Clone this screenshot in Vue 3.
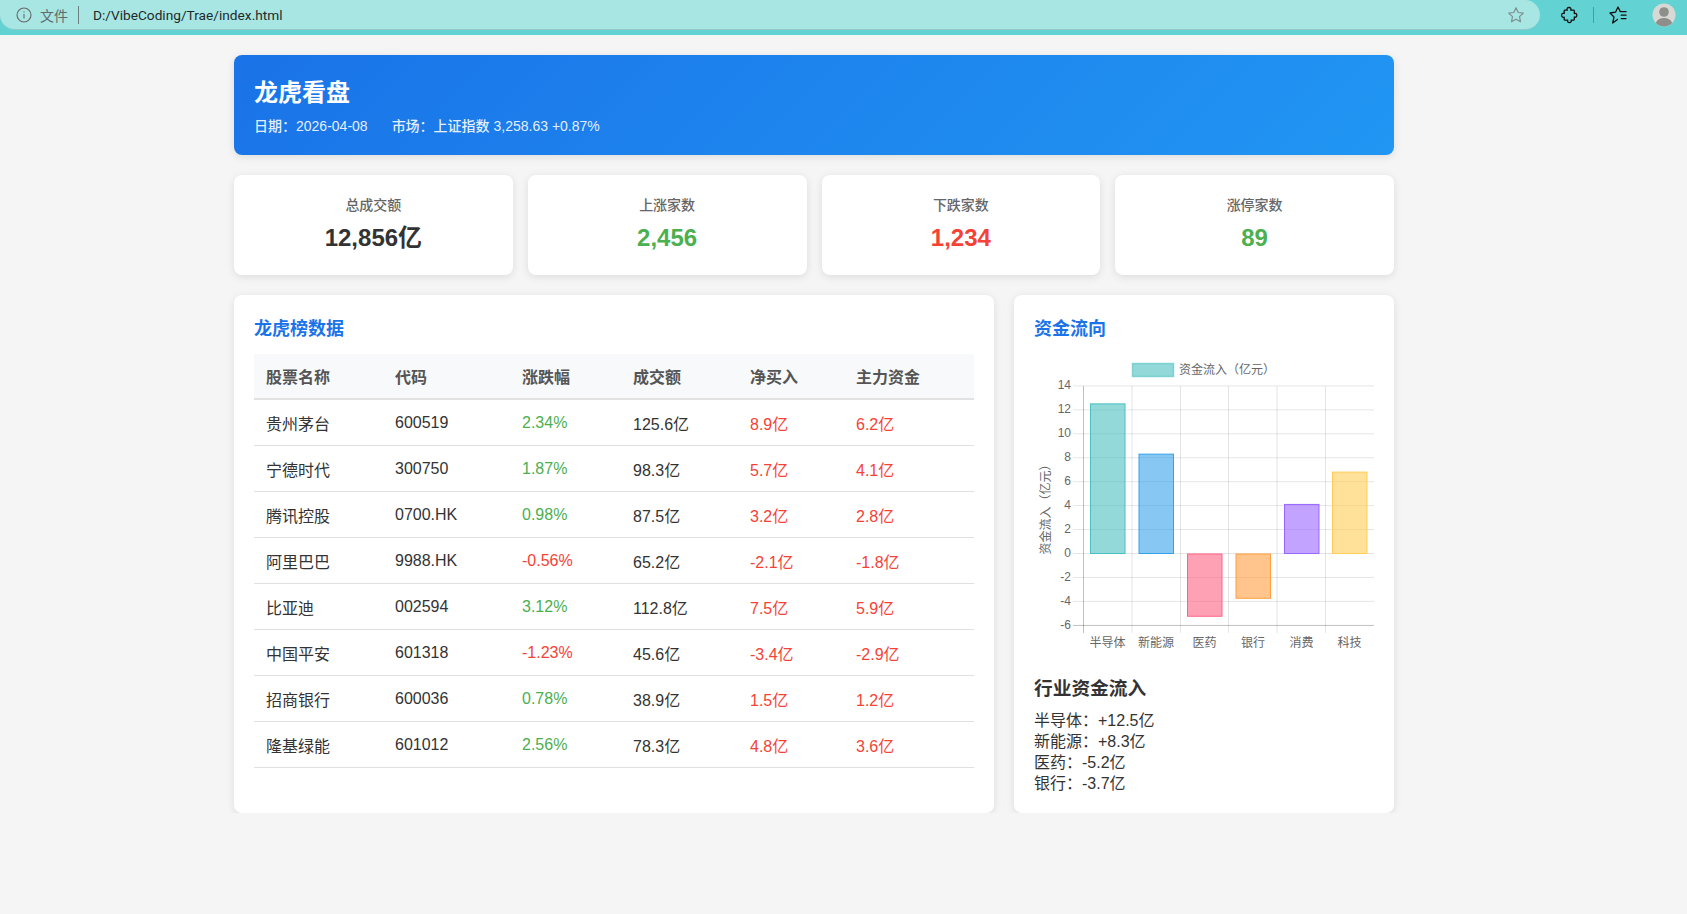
<script setup>
const stats = [
  { label: '总成交额', value: '12,856亿', tone: 'dark' },
  { label: '上涨家数', value: '2,456', tone: 'up' },
  { label: '下跌家数', value: '1,234', tone: 'down' },
  { label: '涨停家数', value: '89', tone: 'up' },
]
const rows = [
  ['贵州茅台', '600519', '2.34%', '125.6亿', '8.9亿', '6.2亿', false],
  ['宁德时代', '300750', '1.87%', '98.3亿', '5.7亿', '4.1亿', false],
  ['腾讯控股', '0700.HK', '0.98%', '87.5亿', '3.2亿', '2.8亿', false],
  ['阿里巴巴', '9988.HK', '-0.56%', '65.2亿', '-2.1亿', '-1.8亿', true],
  ['比亚迪', '002594', '3.12%', '112.8亿', '7.5亿', '5.9亿', false],
  ['中国平安', '601318', '-1.23%', '45.6亿', '-3.4亿', '-2.9亿', true],
  ['招商银行', '600036', '0.78%', '38.9亿', '1.5亿', '1.2亿', false],
  ['隆基绿能', '601012', '2.56%', '78.3亿', '4.8亿', '3.6亿', false],
]
const flows = ['半导体：+12.5亿', '新能源：+8.3亿', '医药：-5.2亿', '银行：-3.7亿']

// Chart geometry, in the coordinates of the 340 x 300 chart box
const zeroY = 203.5
const unit = 11.97
const ticks = [14, 12, 10, 8, 6, 4, 2, 0, -2, -4, -6].map((v) => ({ v, y: zeroY - v * unit }))
const gridX = [49.5, 98, 146.5, 194.5, 243, 291.5]
const bars = [
  { label: '半导体', v: 12.5, x: 56.5, rgb: '75,192,192' },
  { label: '新能源', v: 8.3, x: 105, rgb: '54,162,235' },
  { label: '医药', v: -5.2, x: 153.5, rgb: '255,99,132' },
  { label: '银行', v: -3.7, x: 202, rgb: '255,159,64' },
  { label: '消费', v: 4.1, x: 250.5, rgb: '153,102,255' },
  { label: '科技', v: 6.8, x: 298.5, rgb: '255,205,86' },
].map((b) => ({
  ...b,
  y: b.v > 0 ? zeroY - b.v * unit : zeroY + 0.5,
  h: Math.abs(b.v) * unit,
  fill: `rgba(${b.rgb},0.6)`,
  stroke: `rgb(${b.rgb})`,
}))
</script>

<template>
  <div class="shell">
    <div class="browser">
      <div class="address">
        <svg class="info" width="16" height="16" viewBox="0 0 16 16" fill="none" stroke="#666" stroke-width="1.1">
          <circle cx="8" cy="8" r="7" />
          <path d="M8 7v4.4M8 4.4v1.2" />
        </svg>
        <span class="scheme">文件</span>
        <span class="divider"></span>
        <span class="url">D:/VibeCoding/Trae/index.html</span>
        <svg class="star" width="18" height="18" viewBox="0 0 18 18" fill="none" stroke="#7d8f90" stroke-width="1.2" stroke-linejoin="round">
          <path d="M9 1.800l2.200 4.700 5.100.6-3.800 3.500 1 5.100L9 13.200l-4.500 2.500 1-5.100L1.700 7.100l5.100-.6z" />
        </svg>
      </div>
      <div class="tools">
        <svg class="puzzle" width="18" height="18" viewBox="0 0 18 18" fill="none" stroke="#111" stroke-width="1.300" stroke-linejoin="round" stroke-linecap="round">
          <path d="M7.300 4.200C6.500 2.600 7.300 1.500 9 1.500s2.500 1.100 1.700 2.700h2.800c.5 0 .8.300.8.800v2.600c1.500-.7 2.500.2 2.500 1.700s-1 2.400-2.500 1.700v2.400c0 .5-.3.800-.8.800h-2.400c.6 1.500-.2 2.400-1.700 2.400s-2.300-.9-1.700-2.400H5c-.5 0-.8-.3-.8-.8v-2.300c-1.500.7-2.600-.2-2.600-1.800s1.100-2.400 2.600-1.800V5c0-.5.3-.8.800-.8z" />
        </svg>
        <span class="tool-divider"></span>
        <svg class="favorites" width="18" height="18" viewBox="0 0 18 18" fill="none" stroke="#111" stroke-width="1.300" stroke-linejoin="round" stroke-linecap="round">
          <path d="M8.500 13.500L3.700 17 5 11 1 7l5.500-.8L9 1l2.300 4.600" />
          <path d="M12.200 5.700h4.800M12.200 9.200h4.800M12.200 12.600h4.800" />
        </svg>
        <svg class="avatar" width="24" height="24" viewBox="0 0 24 24">
          <circle cx="12" cy="12" r="11.500" fill="#d8d8d4" />
          <circle cx="12" cy="9" r="4.800" fill="#8e8e8a" />
          <path d="M3.800 20c1.300-3.400 4.300-5 8.200-5s6.900 1.600 8.200 5a11.500 11.500 0 0 1-16.400 0z" fill="#8e8e8a" />
        </svg>
      </div>
    </div>

    <main class="page">
      <header class="hero">
        <h1>龙虎看盘</h1>
        <p><span class="date">日期：2026-04-08</span><span>市场：上证指数 3,258.63 +0.87%</span></p>
      </header>

      <section class="stats">
        <div v-for="s in stats" :key="s.label" class="card stat">
          <div class="stat-label">{{ s.label }}</div>
          <div class="stat-value" :class="s.tone">{{ s.value }}</div>
        </div>
      </section>

      <section class="columns">
        <div class="card panel">
          <h2>龙虎榜数据</h2>
          <table>
            <thead>
              <tr>
                <th>股票名称</th><th>代码</th><th>涨跌幅</th><th>成交额</th><th>净买入</th><th>主力资金</th>
              </tr>
            </thead>
            <tbody>
              <tr v-for="r in rows" :key="r[1]">
                <td>{{ r[0] }}</td>
                <td>{{ r[1] }}</td>
                <td :class="r[6] ? 'down' : 'up'">{{ r[2] }}</td>
                <td>{{ r[3] }}</td>
                <td class="down">{{ r[4] }}</td>
                <td class="down">{{ r[5] }}</td>
              </tr>
            </tbody>
          </table>
        </div>

        <div class="card panel">
          <h2>资金流向</h2>
          <svg class="chart" width="340" height="300" viewBox="0 0 340 300">
            <rect x="98.500" y="13.500" width="41" height="13" fill="rgba(75,192,192,0.6)" stroke="rgba(75,192,192,0.6)" stroke-width="1.500" />
            <text x="145" y="23.500" class="tick">资金流入（亿元）</text>

            <g stroke="rgba(0,0,0,0.1)" stroke-width="1">
              <line v-for="t in ticks" :key="t.v" x1="39" x2="340" :y1="t.y" :y2="t.y" />
              <line v-for="x in gridX" :key="x" :x1="x" :x2="x" y1="36" y2="283" />
            </g>
            <line x1="49.500" x2="49.500" y1="36" y2="283" stroke="rgba(0,0,0,0.16)" />
            <line x1="39" x2="340" y1="275.500" y2="275.500" stroke="rgba(0,0,0,0.16)" />

            <rect
              v-for="b in bars"
              :key="b.label"
              :x="b.x"
              :y="b.y"
              width="34.500"
              :height="b.h"
              :fill="b.fill"
              :stroke="b.stroke"
              stroke-width="1"
            />

            <text v-for="t in ticks" :key="'l' + t.v" x="37" :y="t.y + 3.500" text-anchor="end" class="tick">{{ t.v }}</text>
            <text v-for="b in bars" :key="'x' + b.label" :x="b.x + 17" y="297" text-anchor="middle" class="tick">{{ b.label }}</text>
            <text transform="translate(16 156.500) rotate(-90)" text-anchor="middle" class="tick">资金流入（亿元）</text>
          </svg>
          <h3>行业资金流入</h3>
          <p v-for="f in flows" :key="f" class="flow">{{ f }}</p>
        </div>
      </section>
    </main>
  </div>
</template>

<style scoped>
.shell {
  font-family: "Liberation Sans", "Noto Sans CJK SC", sans-serif;
  color: #333;
}
.browser {
  height: 35px;
  background: #63d2d2;
  display: flex;
  align-items: flex-start;
  box-sizing: border-box;
}
.address {
  width: 1540px;
  height: 30px;
  box-sizing: border-box;
  background: #a8e6e4;
  border-bottom: 1px solid #93c9c9;
  border-radius: 15px;
  border-top-left-radius: 0;
  display: flex;
  align-items: center;
  padding: 0 13px 0 16px;
  flex: none;
}
.scheme {
  margin-left: 8px;
  font-size: 14px;
  color: #5d6b6b;
}
.divider {
  width: 1px;
  height: 18px;
  background: #6d8080;
  margin: 0 14px 0 10px;
}
.url {
  font-family: Roboto, "Liberation Sans", sans-serif;
  font-size: 13.700px;
  color: #1f2a2a;
}
.star {
  margin-left: auto;
  margin-right: 2px;
}
.tools {
  flex: 1;
  height: 30px;
  display: flex;
  align-items: center;
}
.puzzle {
  margin-left: 20px;
}
.tool-divider {
  width: 1px;
  height: 16px;
  background: #4f9a9b;
  margin: 0 15px 0 15px;
}
.avatar {
  margin-left: 25px;
}
.page {
  padding: 20px 0 0 234px;
  width: 1160px;
}
.hero {
  height: 100px;
  box-sizing: border-box;
  padding: 22px 20px 20px;
  color: #fff;
  border-radius: 8px;
  background: linear-gradient(135deg, #1a73e8, #2196f3);
  box-shadow: 0 2px 8px rgba(0, 0, 0, 0.1);
}
.hero h1 {
  margin: 0 0 8px;
  font-size: 24px;
  line-height: 32px;
  font-weight: 700;
}
.hero p {
  margin: 0;
  font-size: 14px;
  line-height: 18px;
  font-weight: 500;
  color: rgba(255, 255, 255, 0.9);
}
.date {
  margin-right: 24px;
}
.stats {
  display: grid;
  grid-template-columns: repeat(4, 1fr);
  gap: 15px;
  margin-top: 20px;
}
.card {
  background: #fff;
  border-radius: 8px;
  box-shadow: 0 2px 8px rgba(0, 0, 0, 0.1);
}
.stat {
  height: 100px;
  box-sizing: border-box;
  padding-top: 20px;
  text-align: center;
}
.stat-label {
  font-size: 14px;
  line-height: 20px;
  font-weight: 500;
  color: #666;
}
.stat-value {
  margin-top: 7px;
  font-size: 24px;
  line-height: 32px;
  font-weight: 700;
}
.dark {
  color: #333;
}
.up {
  color: #4caf50;
}
.down {
  color: #f44336;
}
.columns {
  display: grid;
  grid-template-columns: 760px 380px;
  gap: 20px;
  margin-top: 20px;
}
.panel {
  padding: 22px 20px 20px;
  box-sizing: border-box;
  height: 518px;
}
h2 {
  margin: 0 0 12px;
  height: 25px;
  font-size: 18px;
  line-height: 25px;
  font-weight: 700;
  color: #1a73e8;
}
table {
  width: 720px;
  border-collapse: collapse;
  table-layout: fixed;
  font-size: 16px;
}
th {
  height: 45px;
  box-sizing: border-box;
  padding: 0 12px;
  text-align: left;
  background: #f8f9fa;
  color: #555;
  font-weight: 700;
  border-bottom: 2px solid #e2e2e2;
}
th:nth-child(1) { width: 129px; }
th:nth-child(2) { width: 127px; }
th:nth-child(3) { width: 111px; }
th:nth-child(4) { width: 117px; }
th:nth-child(5) { width: 106px; }
th:nth-child(6) { width: 130px; }
td {
  height: 46px;
  box-sizing: border-box;
  padding: 2px 12px 0;
  border-bottom: 1px solid #e0e0e0;
}
.chart {
  display: block;
  margin-top: -4px;
}
.tick {
  font-family: "Liberation Sans", "Noto Sans CJK SC", sans-serif;
  font-size: 12px;
  fill: #666;
}
h3 {
  margin: 27px 0 9px;
  font-size: 18.720px;
  line-height: 24px;
  font-weight: 700;
  color: #333;
}
.flow {
  margin: 0;
  font-size: 16px;
  line-height: 21px;
}
</style>

<style>
html, body {
  margin: 0;
  background: #f5f5f5;
  overflow: hidden;
}
</style>
